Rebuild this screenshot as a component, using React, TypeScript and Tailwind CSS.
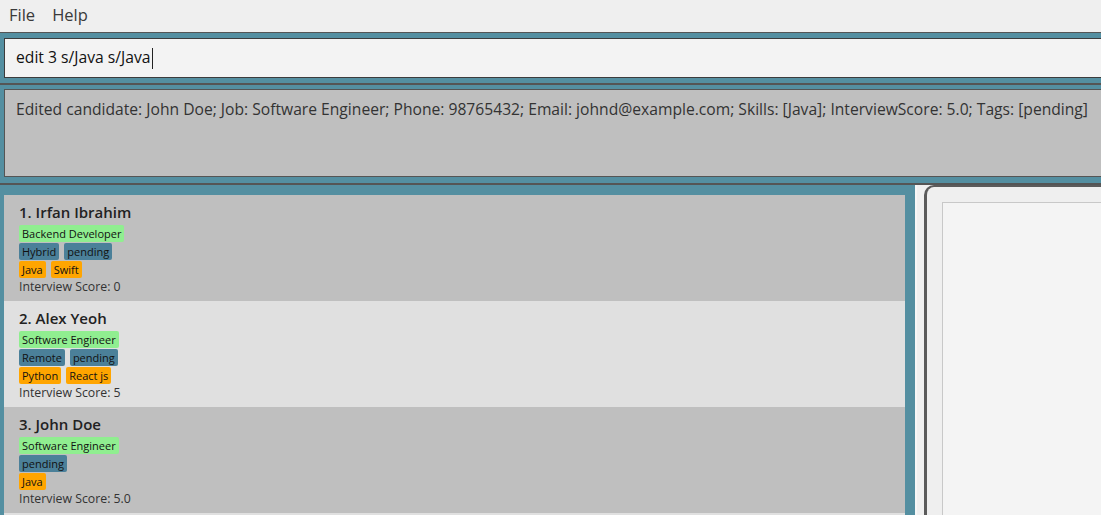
import React from "react";

type Candidate = {
  name: string;
  job: string;
  tags: string[];
  skills: string[];
  score: string;
};

const candidates: Candidate[] = [
  {
    name: "Irfan Ibrahim",
    job: "Backend Developer",
    tags: ["Hybrid", "pending"],
    skills: ["Java", "Swift"],
    score: "0",
  },
  {
    name: "Alex Yeoh",
    job: "Software Engineer",
    tags: ["Remote", "pending"],
    skills: ["Python", "React js"],
    score: "5",
  },
  {
    name: "John Doe",
    job: "Software Engineer",
    tags: ["pending"],
    skills: ["Java"],
    score: "5.0",
  },
];

const result =
  "Edited candidate: John Doe; Job: Software Engineer; Phone: 98765432; Email: johnd@example.com; Skills: [Java]; InterviewScore: 5.0; Tags: [pending]";

function Tag({ label, color }: { label: string; color: string }) {
  return (
    <span
      className={`flex h-[17px] items-center rounded-[2px] px-[3px] text-[11px] leading-none text-[#111] ${color}`}
    >
      {label}
    </span>
  );
}

function CandidateCard({ c, index }: { c: Candidate; index: number }) {
  const bg = index % 2 === 0 ? "bg-[#bfbfbf]" : "bg-[#e0e0e0]";
  return (
    <div className={`flex h-[106px] shrink-0 flex-col pl-[15px] pt-[6px] ${bg}`}>
      <div className="h-[22px] text-[15px] font-semibold leading-[22px] text-[#222]">
        {index + 1}. {c.name}
      </div>
      <div className="mt-[2px] flex flex-col gap-[1px]">
        <div className="flex">
          <Tag label={c.job} color="bg-[#90ee90]" />
        </div>
        <div className="flex gap-[5px]">
          {c.tags.map((t) => (
            <Tag key={t} label={t} color="bg-[#4b8099]" />
          ))}
        </div>
        <div className="flex gap-[5px]">
          {c.skills.map((s) => (
            <Tag key={s} label={s} color="bg-[#ffa500]" />
          ))}
        </div>
      </div>
      <div className="mt-[1px] h-[16px] text-[12.3px] leading-[16px] text-[#333]">
        Interview Score: {c.score}
      </div>
    </div>
  );
}

export default function App() {
  return (
    <div
      className="flex h-[515px] w-[1101px] flex-col overflow-hidden bg-[#548fa1]"
      style={{ fontFamily: '"Open Sans", "Noto Sans", sans-serif' }}
    >
      {/* Menu bar */}
      <div className="flex h-[33px] shrink-0 gap-[17px] border-b border-[#555] bg-[#efefef] pl-[9px] pt-[3px] text-[16.5px] text-[#3a3a3a]">
        <span>File</span>
        <span>Help</span>
      </div>

      {/* Command box */}
      <div className="shrink-0 pb-[5px] pl-[4px] pt-[5px]">
        <div className="flex h-[40px] items-center border border-r-0 border-[#3c3c3c] bg-[#f3f3f3] pl-[11px] text-[15.7px] text-[#111]">
          <span>edit 3 s/Java s/Java</span>
          <span className="ml-[1px] h-[21px] w-[1px] bg-[#222]" />
        </div>
      </div>

      {/* Result display */}
      <div className="shrink-0 border-t-2 border-[#555] pb-[6px] pl-[4px] pt-[4px]">
        <div className="h-[88px] whitespace-nowrap border border-r-0 border-[#555] bg-[#bfbfbf] pl-[11px] pt-[8px] text-[15.65px] text-[#333]">
          {result}
        </div>
      </div>

      {/* Main area */}
      <div className="flex min-h-0 flex-1 border-t-2 border-[#555]">
        <div className="flex w-[915px] shrink-0 flex-col overflow-hidden pl-[4px] pr-[10px] pt-[10px]">
          {candidates.map((c, i) => (
            <CandidateCard key={c.name} c={c} index={i} />
          ))}
          <div className="h-[20px] shrink-0 bg-[#e0e0e0]" />
        </div>
        <div className="w-[2px] shrink-0 bg-[#f7f7f7]" />
        <div className="flex-1 bg-[#f0f0f0] pl-[7px]">
          <div className="h-full rounded-tl-[10px] border-l-[3px] border-t-[2px] border-[#5b5b5b] bg-[#efefef] pl-[15px] pt-[15px]">
            <div className="h-full border-l border-t border-[#c8c8c8] bg-[#f4f4f4]" />
          </div>
        </div>
      </div>
    </div>
  );
}
